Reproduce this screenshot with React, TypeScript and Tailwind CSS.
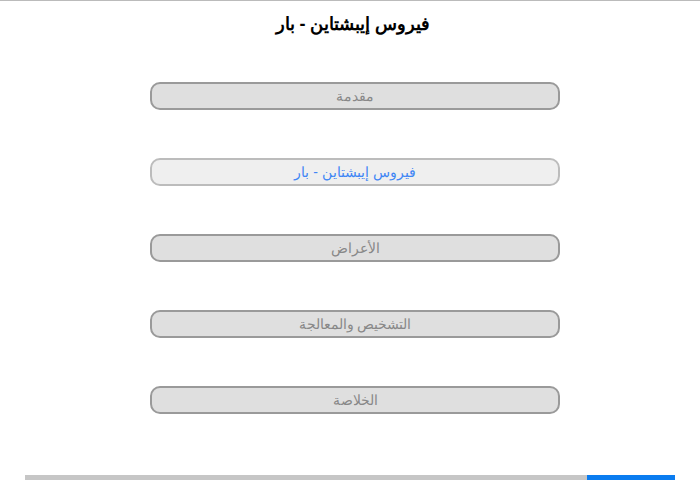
const items = [
  { label: "مقدمة", active: false },
  { label: "فيروس إيبشتاين - بار", active: true },
  { label: "الأعراض", active: false },
  { label: "التشخيص والمعالجة", active: false },
  { label: "الخلاصة", active: false },
];

export default function App() {
  return (
    <div
      dir="rtl"
      className="w-[700px] h-[480px] bg-white border-t border-[#bbbbbb] flex flex-col overflow-hidden"
      style={{ fontFamily: "'Liberation Sans', Arial, sans-serif" }}
    >
      {/* Title */}
      <h1 className="mt-[12px] ml-[6px] text-center text-[18px] leading-[22px] font-bold text-black">
        فيروس إيبشتاين - بار
      </h1>

      {/* Sections */}
      <div className="mt-[47px] ml-[10px] flex flex-col items-center gap-[48px]">
        {items.map((item) => (
          <button
            key={item.label}
            className={
              item.active
                ? "w-[410px] h-[28px] rounded-[10px] border-2 border-[#bcbcbc] bg-[#efefef] text-[14px] font-medium text-[#3f86f5] flex items-center justify-center"
                : "w-[410px] h-[28px] rounded-[10px] border-2 border-[#9a9a9a] bg-[#dfdfdf] text-[14px] font-medium text-[#888888] flex items-center justify-center"
            }
          >
            {item.label}
          </button>
        ))}
      </div>

      {/* Progress */}
      <div className="mt-auto mx-[25px] h-[5px] flex" dir="ltr">
        <div className="flex-1 bg-[#c6c6c6]" />
        <div className="w-[88px] bg-[#0a7cf0]" />
      </div>
    </div>
  );
}
